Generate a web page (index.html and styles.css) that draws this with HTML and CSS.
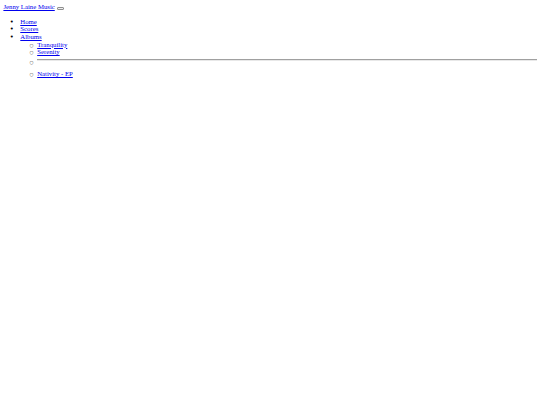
FILE: index.html
```html
<!DOCTYPE html>
<html lang="en">
<head>
<meta charset="utf-8">
<title>Jenny Laine Music</title>
<link rel="stylesheet" href="styles.css">
</head>
<body>
<nav class="navbar">
  <a class="brand" href="#">Jenny Laine Music</a>
  <button class="toggler" type="button"><span class="toggler-icon"></span></button>
  <div class="menu">
    <ul class="nav-list">
      <li class="nav-item"><a class="nav-link" href="#">Home</a></li>
      <li class="nav-item"><a class="nav-link" href="#">Scores</a></li>
      <li class="nav-item"><a class="nav-link" href="#">Albums</a>
        <ul class="dropdown">
          <li class="dropdown-row"><a class="dropdown-item" href="#">Tranquility</a></li>
          <li class="dropdown-row"><a class="dropdown-item" href="#">Serenity</a></li>
          <li class="dropdown-row"><hr class="divider"></li>
          <li class="dropdown-row"><a class="dropdown-item" href="#">Nativity - EP</a></li>
        </ul>
      </li>
    </ul>
  </div>
</nav>
</body>
</html>
```

FILE: styles.css
```css
body {
  margin: 3.4px;
  font-family: "Liberation Serif", "Times New Roman", serif;
  font-size: 6.75px;
  line-height: 7.6px;
}
a {
  color: #0000ee;
}
.toggler {
  display: inline-block;
  vertical-align: baseline;
  width: 7px;
  height: 3px;
  padding: 0;
  margin: 0 0 0 1px;
  border: 1px solid #8f8f8f;
  border-radius: 1px;
  background: #efefef;
}
.nav-list {
  margin: 6.75px 0;
  padding-left: 16.9px;
}
.nav-item::marker {
  content: "\2022\00a0\00a0\00a0";
  font-family: "DejaVu Sans", sans-serif;
  font-size: 6.75px;
}
.dropdown {
  margin: 0;
  padding-left: 16.9px;
}
.dropdown-row::marker {
  content: "\25CB\00a0\00a0\2009";
  font-family: "DejaVu Sans", sans-serif;
  font-size: 4.5px;
  color: #222;
}
.divider {
  margin: 3.4px 0;
  border: 0;
  border-top: 1px solid #a0a0a0;
  border-bottom: 1px solid #e8e8e8;
  height: 0;
}
```
